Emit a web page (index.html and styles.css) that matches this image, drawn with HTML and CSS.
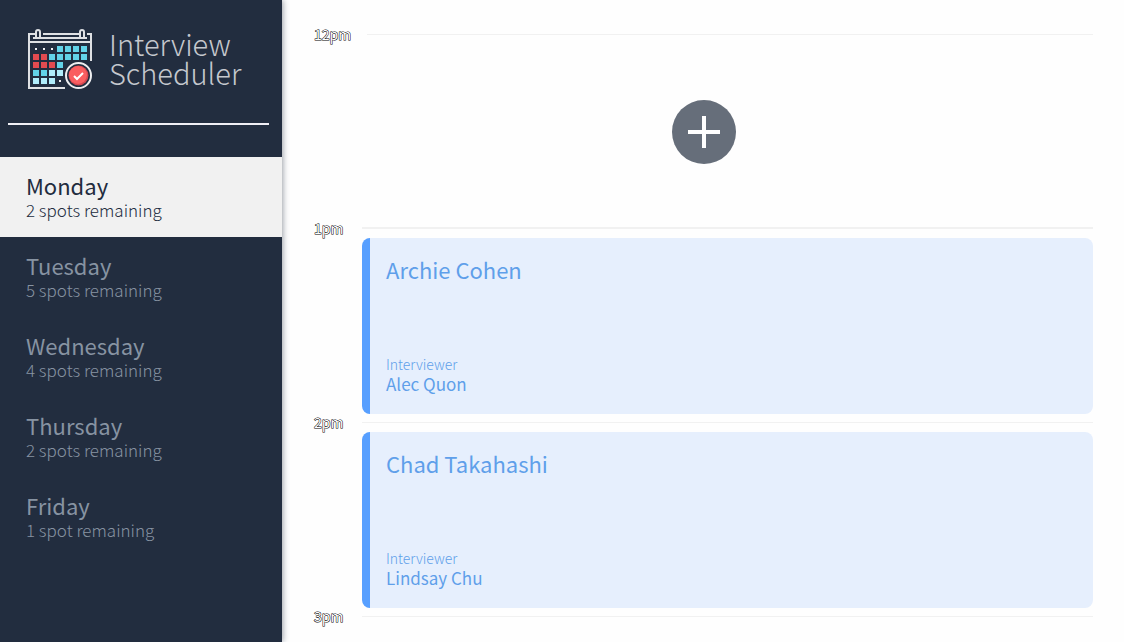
FILE: index.html
```html
<!DOCTYPE html>
<html lang="en">
<head>
<meta charset="utf-8">
<meta name="viewport" content="width=device-width, initial-scale=1">
<title>Interview Scheduler</title>
<link rel="stylesheet" href="styles.css">
</head>
<body>
<main class="layout">
  <section class="sidebar">
    <div class="logo">
      <svg class="logo-icon" viewBox="0 0 66 62" aria-hidden="true">
        <g fill="none" stroke="#dfe1e4" stroke-width="2">
          <path d="M7 6H1V60H37M15 6H52M59 6H63V33M1 14H63"/>
          <path d="M5 10H59"/>
          <path d="M8 9V4a2 2 0 0 1 4 0V9M52 9V4a2 2 0 0 1 4 0V9"/>
        </g>
        <g fill="#eeeef0"><path d="M7 20h2v2H7zM15 20h2v2h-2zM23 20h2v2h-2zM31 52h2v2h-2z"/></g>
        <path fill="#62d3e8" d="M29 18h6v6h-6zM37 18h6v6h-6zM45 18h6v6h-6zM53 18h6v6h-6zM21 26h6v6h-6zM29 26h6v6h-6zM37 26h6v6h-6zM45 26h6v6h-6zM53 26h6v6h-6zM29 34h6v6h-6zM5 42h6v6H5zM13 42h6v6h-6z"/>
        <path fill="#e34b50" d="M5 26h6v6H5zM13 26h6v6h-6zM5 34h6v6H5zM13 34h6v6h-6zM21 34h6v6h-6z"/>
        <path fill="#b0ecfa" d="M21 42h6v6h-6zM29 42h6v6h-6zM5 50h6v6H5zM13 50h6v6h-6zM21 50h6v6h-6z"/>
        <circle cx="50.500" cy="47.500" r="15" fill="#222d3f"/>
        <circle cx="50.500" cy="47.500" r="12.5" fill="#222d3f" stroke="#eeeef0" stroke-width="2"/>
        <circle cx="50.500" cy="47.500" r="10" fill="#d34750"/>
        <circle cx="50" cy="47" r="9" fill="#fa5e60"/>
        <path d="M46 48l3 3 6-6" fill="none" stroke="#fff" stroke-width="2"/>
      </svg>
      <h1 class="logo-name">Interview<br>Scheduler</h1>
    </div>
    <hr class="sidebar-separator">
    <nav class="day-list" aria-label="Days">
      <button class="day day-selected" type="button" aria-current="true"><span class="day-name">Monday</span><span class="day-spots">2 spots remaining</span></button>
      <button class="day" type="button"><span class="day-name">Tuesday</span><span class="day-spots">5 spots remaining</span></button>
      <button class="day" type="button"><span class="day-name">Wednesday</span><span class="day-spots">4 spots remaining</span></button>
      <button class="day" type="button"><span class="day-name">Thursday</span><span class="day-spots">2 spots remaining</span></button>
      <button class="day" type="button"><span class="day-name">Friday</span><span class="day-spots">1 spot remaining</span></button>
    </nav>
  </section>
  <section class="schedule">
    <article class="appointment">
      <header class="hour"><h2 class="time">12pm</h2><hr class="hour-line"></header>
      <div class="empty-slot">
        <button class="add" type="button" aria-label="Add appointment">
          <svg class="add-icon" viewBox="0 0 32 32" aria-hidden="true"><path d="M16 0V32M0 16H32" stroke="#fff" stroke-width="4"/></svg>
        </button>
      </div>
    </article>
    <article class="appointment">
      <header class="hour"><h2 class="time">1pm</h2><hr class="hour-line hour-line-strong"></header>
      <div class="card">
        <h3 class="student">Archie Cohen</h3>
        <div class="interviewer"><h4 class="interviewer-label">Interviewer</h4><p class="interviewer-name">Alec Quon</p></div>
      </div>
    </article>
    <article class="appointment">
      <header class="hour"><h2 class="time">2pm</h2><hr class="hour-line"></header>
      <div class="card">
        <h3 class="student">Chad Takahashi</h3>
        <div class="interviewer"><h4 class="interviewer-label">Interviewer</h4><p class="interviewer-name">Lindsay Chu</p></div>
      </div>
    </article>
    <article class="appointment">
      <header class="hour"><h2 class="time">3pm</h2><hr class="hour-line"></header>
    </article>
  </section>
</main>
</body>
</html>
```
FILE: styles.css
```css
* { box-sizing: border-box; }

body, h1, h2, h3, h4, p, hr { margin: 0; }

body {
  background: #fefefe;
  font-family: "Noto Sans CJK JP", "Noto Sans CJK SC", "Open Sans", sans-serif;
}

button { border: 0; font: inherit; cursor: pointer; }

hr { border: 0; }

.layout { display: flex; height: 100vh; }

.sidebar {
  flex: none;
  width: 25%;
  min-width: 282px;
  background: #222d3f;
  box-shadow: 1px 0 6px rgba(34, 44, 62, 0.45);
}

.logo {
  display: flex;
  align-items: center;
  gap: 15px;
  padding: 28px 22px 33px 28px;
}

.logo-icon { flex: none; width: 66px; height: 62px; }

.logo-name {
  padding-bottom: 2px;
  color: #c5c8ce;
  font-size: 29px;
  font-weight: 300;
  line-height: 29px;
}

.sidebar-separator {
  height: 2px;
  margin: 0 13px 32px 8px;
  background: #f0eff5;
}

.day-list { display: flex; flex-direction: column; }

.day {
  display: flex;
  flex-direction: column;
  justify-content: center;
  height: 80px;
  padding: 0 26px;
  background: transparent;
  color: #8793a2;
  text-align: left;
}

.day-name { font-size: 22px; line-height: 26px; }

.day-spots { font-size: 17px; font-weight: 300; line-height: 24px; }

.day-selected { background: #f1f1f1; color: #222c3e; }

.schedule {
  flex: 1;
  min-width: 0;
  padding: 26px 31px 0 32px;
  overflow: hidden;
}

.hour { display: flex; align-items: center; height: 18px; padding-bottom: 2px; }

.time {
  min-width: 48px;
  padding-right: 16px;
  color: #fff;
  font-size: 14px;
  font-weight: 400;
  line-height: 16px;
  -webkit-text-stroke: 1px #000;
  paint-order: stroke fill;
}

.hour-line { flex: 1; height: 1px; background: #f1f1f1; }

.hour-line-strong { height: 2px; }

.empty-slot {
  display: flex;
  align-items: center;
  justify-content: center;
  height: 176px;
}

.add {
  display: grid;
  place-items: center;
  width: 64px;
  height: 64px;
  padding: 0;
  border-radius: 50%;
  background: #666e7a;
}

.add-icon { width: 32px; height: 32px; }

.card {
  display: flex;
  flex-direction: column;
  justify-content: space-between;
  height: 176px;
  margin-left: 48px;
  padding: 16px 16px 20px;
  border-left: 8px solid #579fff;
  border-radius: 8px;
  background: #e6effd;
  color: #5f9fea;
}

.student { font-size: 22px; font-weight: 400; line-height: 30px; }

.interviewer-label { font-size: 14px; font-weight: 300; line-height: 20px; }

.interviewer-name { font-size: 17px; font-weight: 400; line-height: 20px; }
```
